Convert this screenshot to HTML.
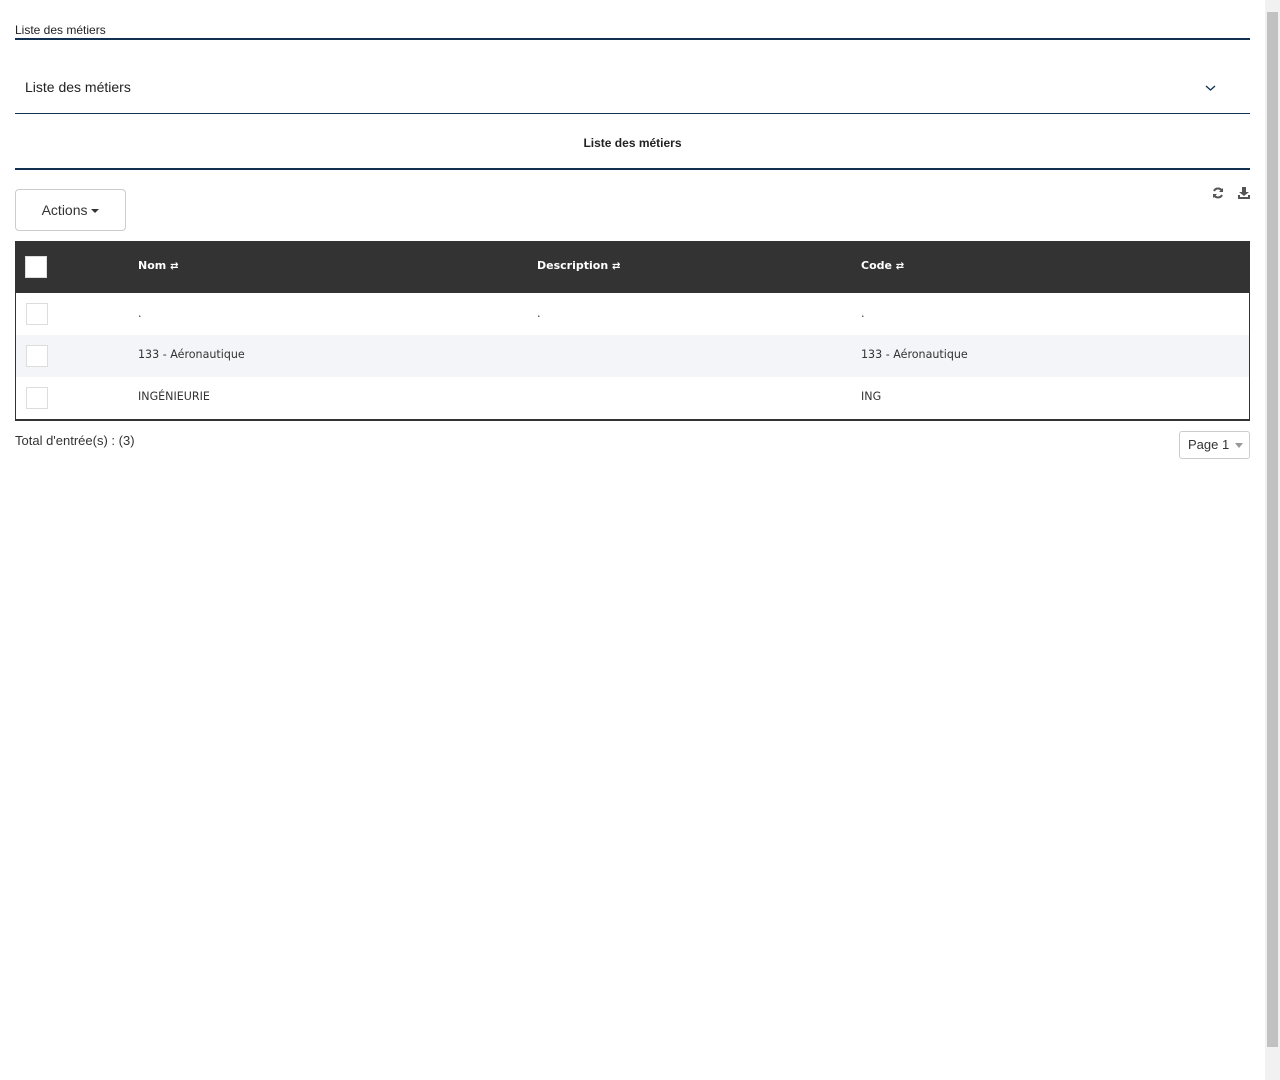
<!DOCTYPE html>
<html><head><meta charset="utf-8"><style>
body{margin:0;width:1280px;height:1080px;background:#fff;font-family:"Liberation Sans",sans-serif;color:#333;position:relative;overflow:hidden}
.abs{position:absolute}
.sb{position:absolute;left:1265px;top:0;width:15px;height:1080px;background:#f1f1f1}
.sb i{position:absolute;left:2px;top:12px;width:11px;height:1035px;background:#c1c1c1}
.cell{position:absolute;font-size:11.1px;font-family:"DejaVu Sans","Liberation Sans",sans-serif;color:#333}
.cb{position:absolute;left:26px;width:20px;height:20px;border:1px solid #ddd;background:#fff}
.th{position:absolute;top:259px;color:#fff;font-weight:bold;font-size:11px;font-family:"DejaVu Sans",sans-serif}
.th span{font-size:10px}
</style></head><body>
<div class="abs" style="left:15px;top:23px;font-size:12px;color:#222">Liste des métiers</div>
<div class="abs" style="left:15px;top:38px;width:1235px;height:2px;background:#12304f"></div>
<div class="abs" style="left:25px;top:79px;font-size:14px;color:#222">Liste des métiers</div>
<svg class="abs" style="left:1205px;top:85px" width="11" height="7"><path d="M1 1l4.5 4 4.5-4" stroke="#12304f" stroke-width="1.3" fill="none"/></svg>
<div class="abs" style="left:15px;top:113px;width:1235px;height:1px;background:#12304f"></div>
<div class="abs" style="left:0;width:1265px;top:136px;text-align:center;font-size:12px;font-weight:bold;color:#222">Liste des métiers</div>
<div class="abs" style="left:15px;top:168px;width:1235px;height:2px;background:#12304f"></div>
<div class="abs" style="left:15px;top:189px;width:109px;height:40px;border:1px solid #ccc;border-radius:4px;font-size:14px;line-height:40px;text-align:center;color:#333">Actions <span style="display:inline-block;border-top:4px solid #333;border-left:4px solid transparent;border-right:4px solid transparent;vertical-align:middle"></span></div>
<svg class="abs" style="left:1212px;top:187px" width="12" height="12"><path d="M10 4A4.5 4.5 0 0 0 2 4M2 8a4.5 4.5 0 0 0 8 0" stroke="#555" stroke-width="2" fill="none"/><path d="M11 1v4H7zM1 11V7h4z" fill="#555"/></svg>
<svg class="abs" style="left:1238px;top:187px" width="12" height="12"><path d="M4 0h4v5h3L6 9 1 5h3z" fill="#555"/><path d="M0 8h2v2h8V8h2v4H0z" fill="#555"/></svg>
<div class="abs" style="left:15px;top:241px;width:1235px;height:52px;background:#333"></div>
<div class="abs" style="left:25px;top:256px;width:20px;height:20px;background:#fff;border:1px solid #ddd"></div>
<div class="th" style="left:138px">Nom <span>⇄</span></div>
<div class="th" style="left:537px">Description <span>⇄</span></div>
<div class="th" style="left:861px">Code <span>⇄</span></div>
<div class="abs" style="left:15px;top:293px;width:1233px;height:126px;border:1px solid #333;border-top:none;border-bottom:2px solid #333"></div>
<div class="abs" style="left:16px;top:335px;width:1233px;height:42px;background:#f4f5f8"></div>
<div class="cb" style="top:303px"></div><div class="cb" style="top:345px"></div><div class="cb" style="top:387px"></div>
<div class="cell" style="left:138px;top:307px">.</div><div class="cell" style="left:537px;top:307px">.</div><div class="cell" style="left:861px;top:307px">.</div>
<div class="cell" style="left:138px;top:348px">133 - Aéronautique</div><div class="cell" style="left:861px;top:348px">133 - Aéronautique</div>
<div class="cell" style="left:138px;top:390px">INGÉNIEURIE</div><div class="cell" style="left:861px;top:390px">ING</div>
<div class="abs" style="left:15px;top:433px;font-size:13px;color:#333">Total d'entrée(s) : (3)</div>
<div class="abs" style="left:1179px;top:431px;width:69px;height:26px;border:1px solid #ccc;border-radius:3px;font-size:13px;line-height:26px;color:#333"><span style="margin-left:8px">Page 1</span><span style="position:absolute;right:6px;top:11px;border-top:5px solid #999;border-left:4px solid transparent;border-right:4px solid transparent"></span></div>
<div class="sb"><i></i></div>
</body></html>
